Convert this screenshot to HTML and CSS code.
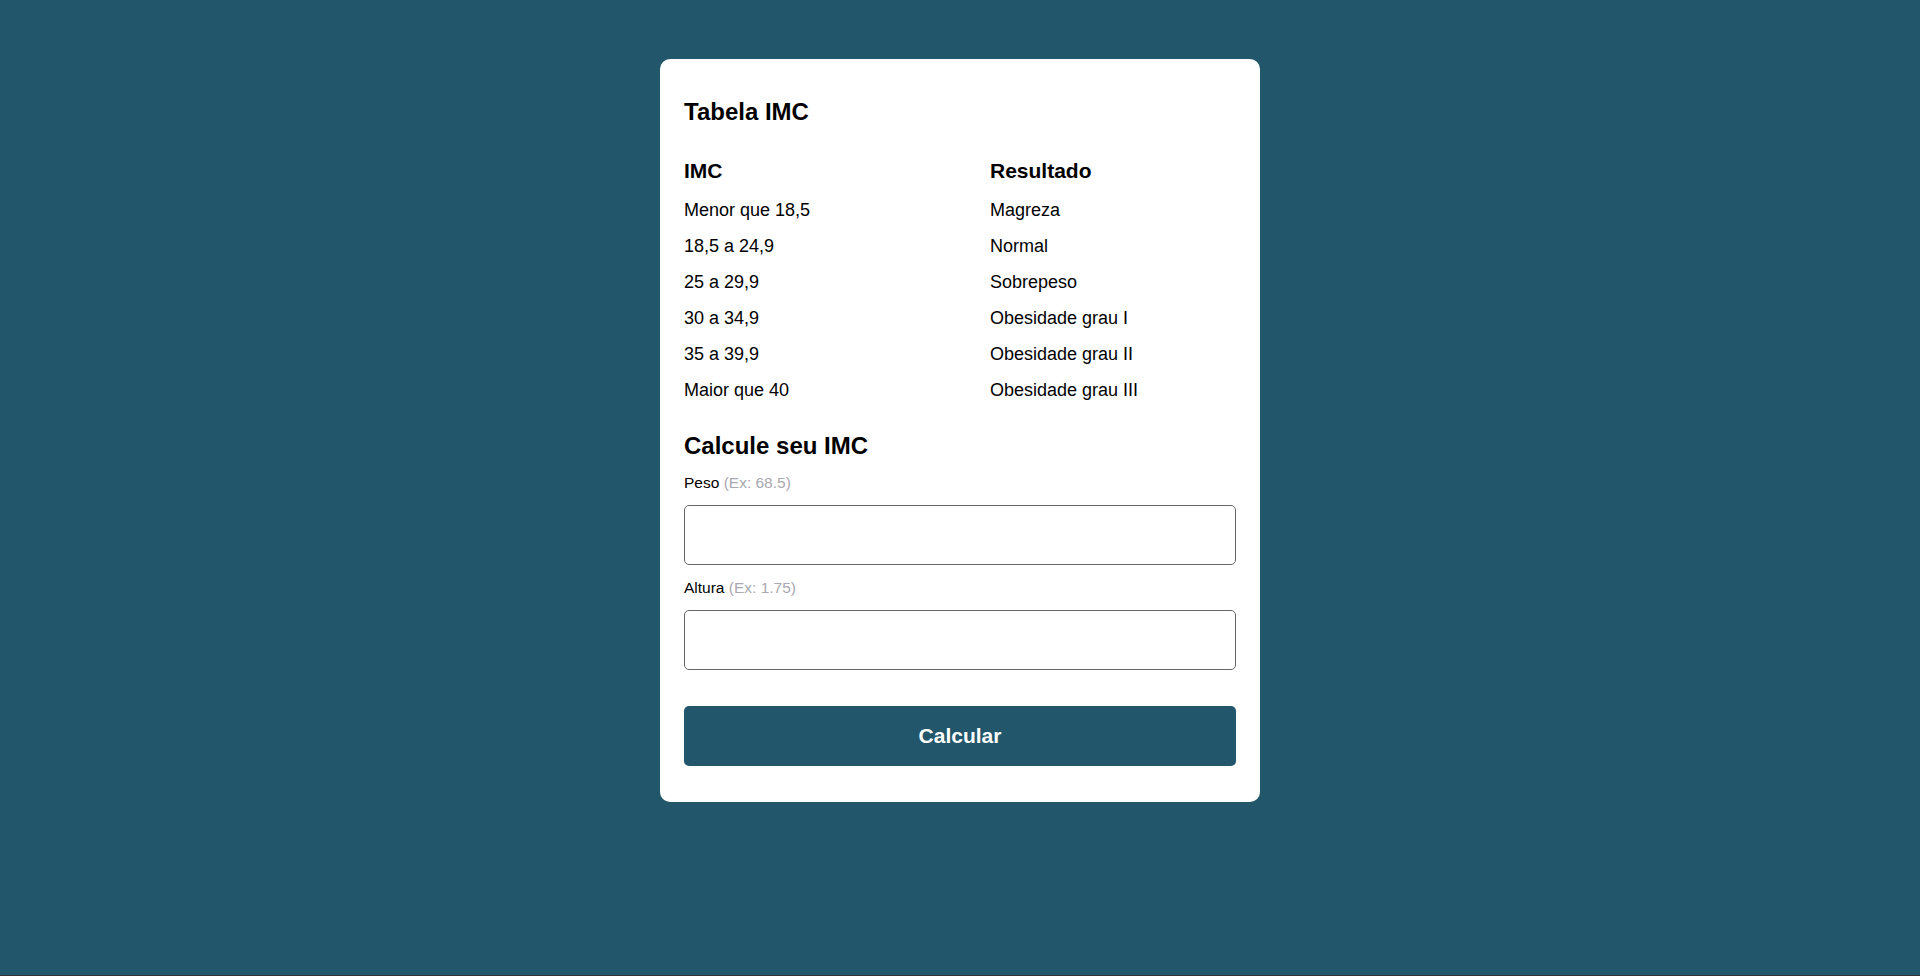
FILE: index.html
```html
<!DOCTYPE html>
<html lang="pt-BR">
<head>
<meta charset="utf-8">
<title>Calculadora IMC</title>
<link rel="stylesheet" href="styles.css">
</head>
<body>
<main class="card">
  <h2 class="title">Tabela IMC</h2>
  <table class="imc-table">
    <colgroup><col class="col-imc"><col></colgroup>
    <thead>
      <tr><th>IMC</th><th>Resultado</th></tr>
    </thead>
    <tbody>
      <tr><td>Menor que 18,5</td><td>Magreza</td></tr>
      <tr><td>18,5 a 24,9</td><td>Normal</td></tr>
      <tr><td>25 a 29,9</td><td>Sobrepeso</td></tr>
      <tr><td>30 a 34,9</td><td>Obesidade grau I</td></tr>
      <tr><td>35 a 39,9</td><td>Obesidade grau II</td></tr>
      <tr><td>Maior que 40</td><td>Obesidade grau III</td></tr>
    </tbody>
  </table>
  <h2 class="title title-calc">Calcule seu IMC</h2>
  <form class="form">
    <label class="label" for="peso">Peso <span class="hint">(Ex: 68.5)</span></label>
    <input class="input" id="peso" type="text">
    <label class="label" for="altura">Altura <span class="hint">(Ex: 1.75)</span></label>
    <input class="input" id="altura" type="text">
    <button class="button" type="button">Calcular</button>
  </form>
</main>
</body>
</html>
```
FILE: styles.css
```css
html {
  background: #333333;
}
body {
  margin: 0;
  min-height: 975px;
  background: #22566a;
  font-family: "Liberation Sans", Arial, sans-serif;
  color: #000;
  padding-top: 59px;
  box-sizing: border-box;
}
.card {
  width: 600px;
  box-sizing: border-box;
  margin: 0 auto;
  background: #fff;
  border-radius: 10px;
  padding: 39px 24px 36px;
}
.title {
  margin: 0 0 24px;
  font-size: 24px;
  line-height: 28px;
  font-weight: bold;
}
.imc-table {
  width: 100%;
  border-collapse: collapse;
}
.col-imc {
  width: 306px;
}
.imc-table th {
  text-align: left;
  font-size: 21px;
  font-weight: bold;
  padding: 0;
  height: 42px;
  line-height: 42px;
}
.imc-table td {
  font-size: 18px;
  padding: 0;
  height: 36px;
  line-height: 36px;
}
.title-calc {
  margin-top: 24px;
  margin-bottom: 0;
}
.form {
  display: flex;
  flex-direction: column;
}
.label {
  font-size: 15.5px;
  line-height: 18px;
  margin-top: 14px;
  margin-bottom: 13px;
}
.hint {
  color: #aaa8b0;
}
.input {
  height: 60px;
  box-sizing: border-box;
  border: 1px solid #666;
  border-radius: 5px;
  margin: 0;
  padding: 0 12px;
  font-size: 18px;
  font-family: inherit;
}
.button {
  margin-top: 36px;
  height: 60px;
  border: none;
  border-radius: 5px;
  background: #22566a;
  color: #fff;
  font-family: "Liberation Sans", Arial, sans-serif;
  font-size: 21px;
  font-weight: bold;
  cursor: pointer;
}
```
